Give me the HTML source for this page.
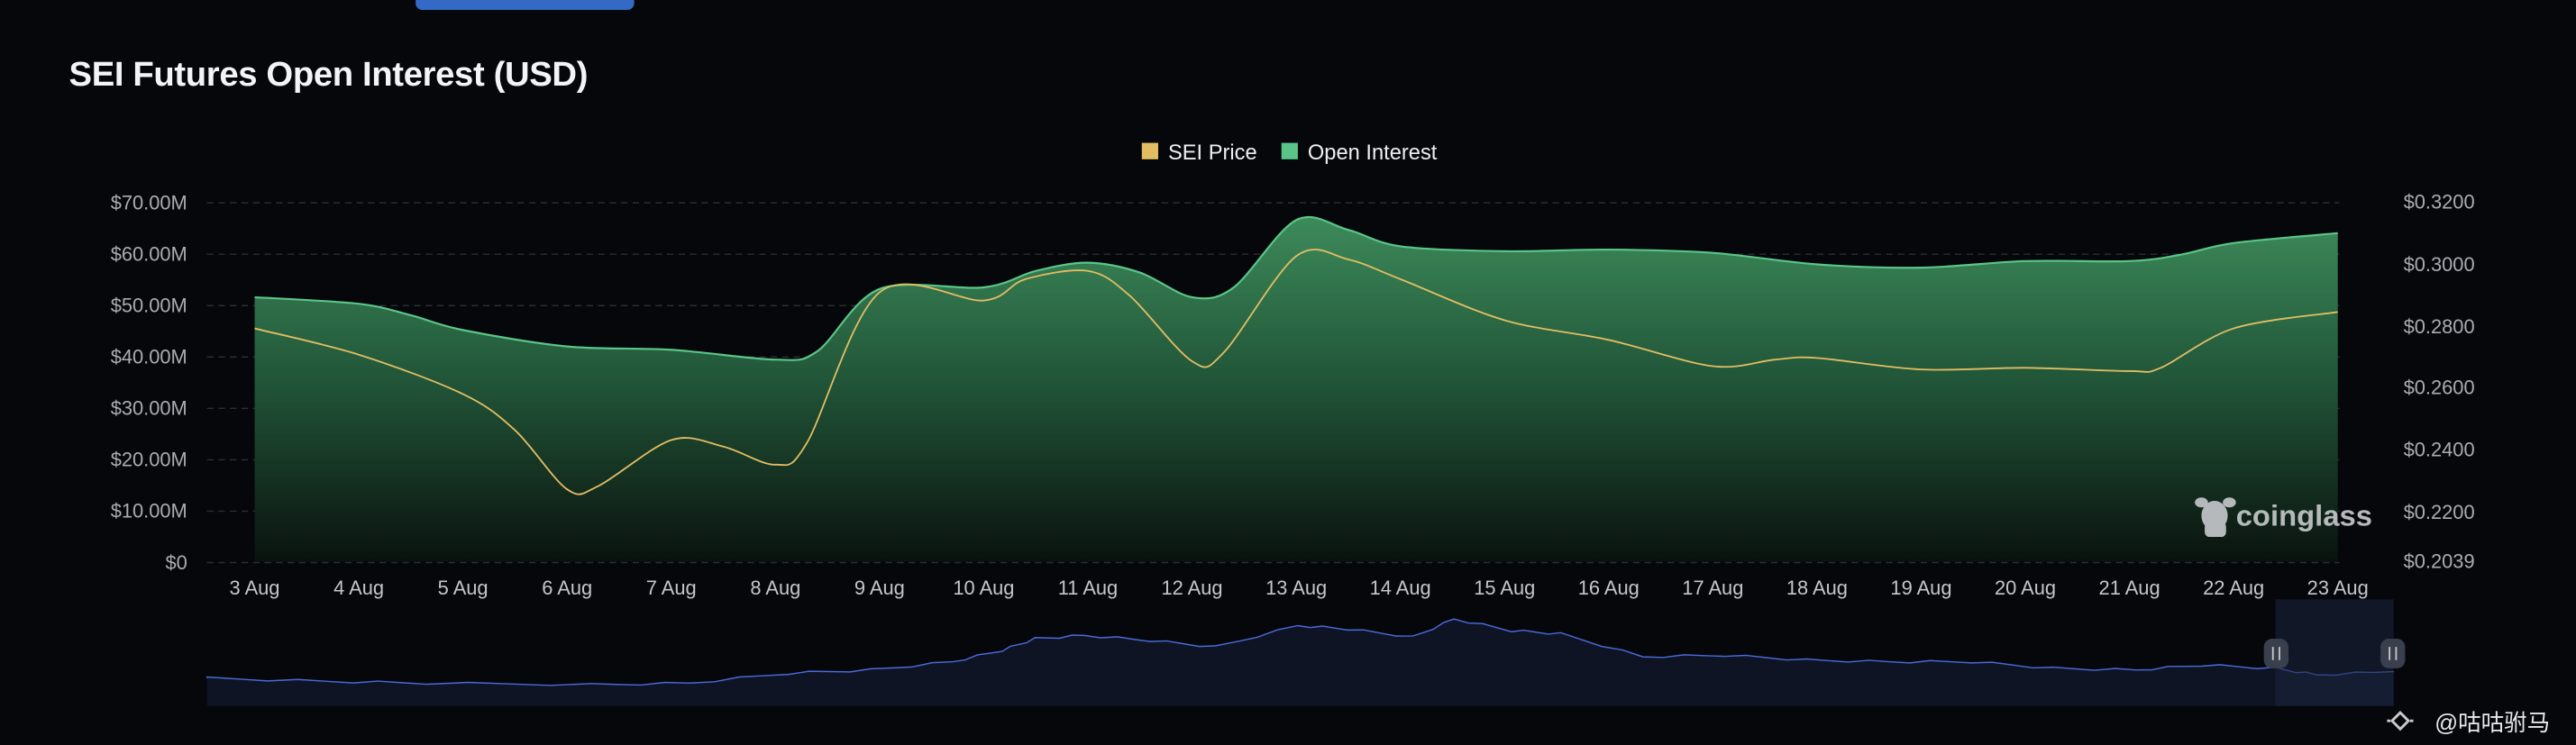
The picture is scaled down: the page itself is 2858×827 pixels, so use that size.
<!DOCTYPE html>
<html><head><meta charset="utf-8"><style>
html,body{margin:0;padding:0;background:#05070b;width:2858px;height:827px;overflow:hidden}
svg{display:block}
text{font-family:"Liberation Sans","Noto Sans CJK SC",sans-serif}
</style></head><body>
<svg id="s" width="2858" height="827" viewBox="0 0 1568 453.7" xmlns="http://www.w3.org/2000/svg">
<defs>
<linearGradient id="g" x1="0" y1="0" x2="0" y2="1">
<stop offset="0" stop-color="#3d8a5a"/>
<stop offset="0.45" stop-color="#22583a"/>
<stop offset="1" stop-color="#0a120e"/>
</linearGradient>
</defs>
<rect width="1568" height="454" fill="#05070b"/>
<rect x="253" y="-6" width="133" height="12" rx="4" fill="#336ac6"/>
<text x="42" y="52" font-size="21" font-weight="bold" fill="#f4f4f6" letter-spacing="-0.2">SEI Futures Open Interest (USD)</text>
<rect x="695" y="87" width="10" height="10" fill="#e2bd62"/>
<text x="711" y="97" font-size="13" fill="#eee">SEI Price</text>
<rect x="780" y="87" width="10" height="10" fill="#5ac589"/>
<text x="796" y="97" font-size="13" fill="#eee">Open Interest</text>
<g id="grid" stroke="#2a2d33" stroke-dasharray="4 3" stroke-width="0.8"></g>
<g id="ly" font-size="12" fill="#a9acb2" text-anchor="end"></g>
<g id="ry" font-size="12" fill="#a9acb2"></g>
<path id="area" fill="url(#g)"/>
<path id="oi" fill="none" stroke="#5ac589" stroke-width="1.2"/>
<path id="pr" fill="none" stroke="#e2bd62" stroke-width="1"/>
<g id="xl" font-size="12" fill="#c4c6cb" text-anchor="middle"></g>
<path id="nav" fill="#0e1424"/>
<path id="navl" fill="none" stroke="#4a6ad8" stroke-width="0.8"/>
<rect x="1385" y="365" width="72" height="65" fill="#1c2540" opacity="0.55"/>
<rect x="1378" y="389" width="15" height="18" rx="5" fill="#3a3f4d"/>
<rect x="1449" y="389" width="15" height="18" rx="5" fill="#3a3f4d"/>
<g stroke="#c8c8c8" stroke-width="1"><line x1="1383.5" y1="394" x2="1383.5" y2="402"/><line x1="1387.5" y1="394" x2="1387.5" y2="402"/><line x1="1454.5" y1="394" x2="1454.5" y2="402"/><line x1="1458.5" y1="394" x2="1458.5" y2="402"/></g>
<g fill="#b5b9bb">
<ellipse cx="1348" cy="314" rx="8" ry="9"/><ellipse cx="1340" cy="306" rx="4" ry="3"/><ellipse cx="1357" cy="306" rx="4" ry="3"/>
<rect x="1342" y="318" width="13" height="9" rx="3"/>
</g>
<text x="1361" y="320" font-size="18" font-weight="bold" fill="#b5b9bb">coinglass</text>
<g fill="none" stroke="#c9c9c9" stroke-width="1.6"><path d="M1461 434 l5 5 l-5 5 l-5 -5 z"/><path d="M1455 439 l-2 0 M1467 439 l2 0"/></g>
<text x="1482" y="445" font-size="14" fill="#e8e8e8">@咕咕驸马</text>
</svg>
<script>
var ns="http://www.w3.org/2000/svg";
function el(p,t,a,txt){var e=document.createElementNS(ns,t);for(var k in a)e.setAttribute(k,a[k]);if(txt)e.textContent=txt;document.getElementById(p).appendChild(e);}
var L=["$70.00M","$60.00M","$50.00M","$40.00M","$30.00M","$20.00M","$10.00M","$0"];
for(var i=0;i<8;i++){var y=123.5+i*31.3;el("grid","line",{x1:126,x2:1424,y1:y,y2:y});el("ly","text",{x:114,y:y+4},L[i]);}
var R=[["$0.3200",123],["$0.3000",161],["$0.2800",199],["$0.2600",236],["$0.2400",274],["$0.2200",312],["$0.2039",342]];
R.forEach(function(r){el("ry","text",{x:1463,y:r[1]+4},r[0]);});
var X0=155,DX=63.4;
for(var d=3;d<=23;d++)el("xl","text",{x:X0+(d-3)*DX,y:362},d+" Aug");
function sm(pts){var s="M"+pts[0][0]+" "+pts[0][1];for(var i=0;i<pts.length-1;i++){var p0=pts[i-1]||pts[i],p1=pts[i],p2=pts[i+1],p3=pts[i+2]||p2;var t=0.16;s+=" C"+(p1[0]+(p2[0]-p0[0])*t)+" "+(p1[1]+(p2[1]-p0[1])*t)+" "+(p2[0]-(p3[0]-p1[0])*t)+" "+(p2[1]-(p3[1]-p1[1])*t)+" "+p2[0]+" "+p2[1];}return s;}
var oi=[[0,181],[1,185],[1.5,192],[2,201],[3,211],[4,213],[5,219],[5.4,214],[6,176],[7,175],[7.5,165],[8,160],[8.5,166],[9,181],[9.4,175],[10,134],[10.5,140],[11,150],[12,153],[13,152],[14,154],[15,161],[16,163],[17,159],[18,159],[18.5,155],[19,148],[20,142]];
var pr=[[0,200],[1,216],[2,240],[2.5,262],[3,298],[3.3,296],[4,268],[4.5,272],[5,283],[5.3,270],[6,178],[7,183],[7.4,170],[8,165],[8.4,180],[9,220],[9.3,215],[10,156],[10.5,158],[11,170],[12,195],[13,207],[14,223],[14.6,219],[15,218],[16,225],[17,224],[18,226],[18.3,224],[19,200],[20,190]];
function mp(a){return a.map(function(p){return[+(X0+p[0]*DX).toFixed(1),p[1]]});}
var o=sm(mp(oi));
document.getElementById("oi").setAttribute("d",o);
document.getElementById("area").setAttribute("d",o+" L1423 342 L155 342 Z");
document.getElementById("pr").setAttribute("d",sm(mp(pr)));
var nv=[[126,413],[200,415],[260,416],[360,417],[420,416],[480,410],[530,408],[580,403],[610,396],[630,389],[660,387],[700,390],[740,394],[790,381],[820,383],[860,388],[885,377],[920,384],[950,386],[1000,400],[1050,399],[1100,402],[1150,403],[1200,403],[1250,407],[1300,408],[1340,405],[1385,407],[1410,411],[1457,409]];
var s="M126 413";nv.forEach(function(p,i){for(var k=0;k<4;k++){var q=nv[i+1];if(!q){s+=" L"+p[0]+" "+p[1];break;}var x=p[0]+(q[0]-p[0])*k/4,y=p[1]+(q[1]-p[1])*k/4+((i*4+k)%3-1)*0.7;s+=" L"+x.toFixed(1)+" "+y.toFixed(1);}});
document.getElementById("navl").setAttribute("d",s);
document.getElementById("nav").setAttribute("d",s+" L1457 430 L126 430 Z");
</script>
</body></html>
